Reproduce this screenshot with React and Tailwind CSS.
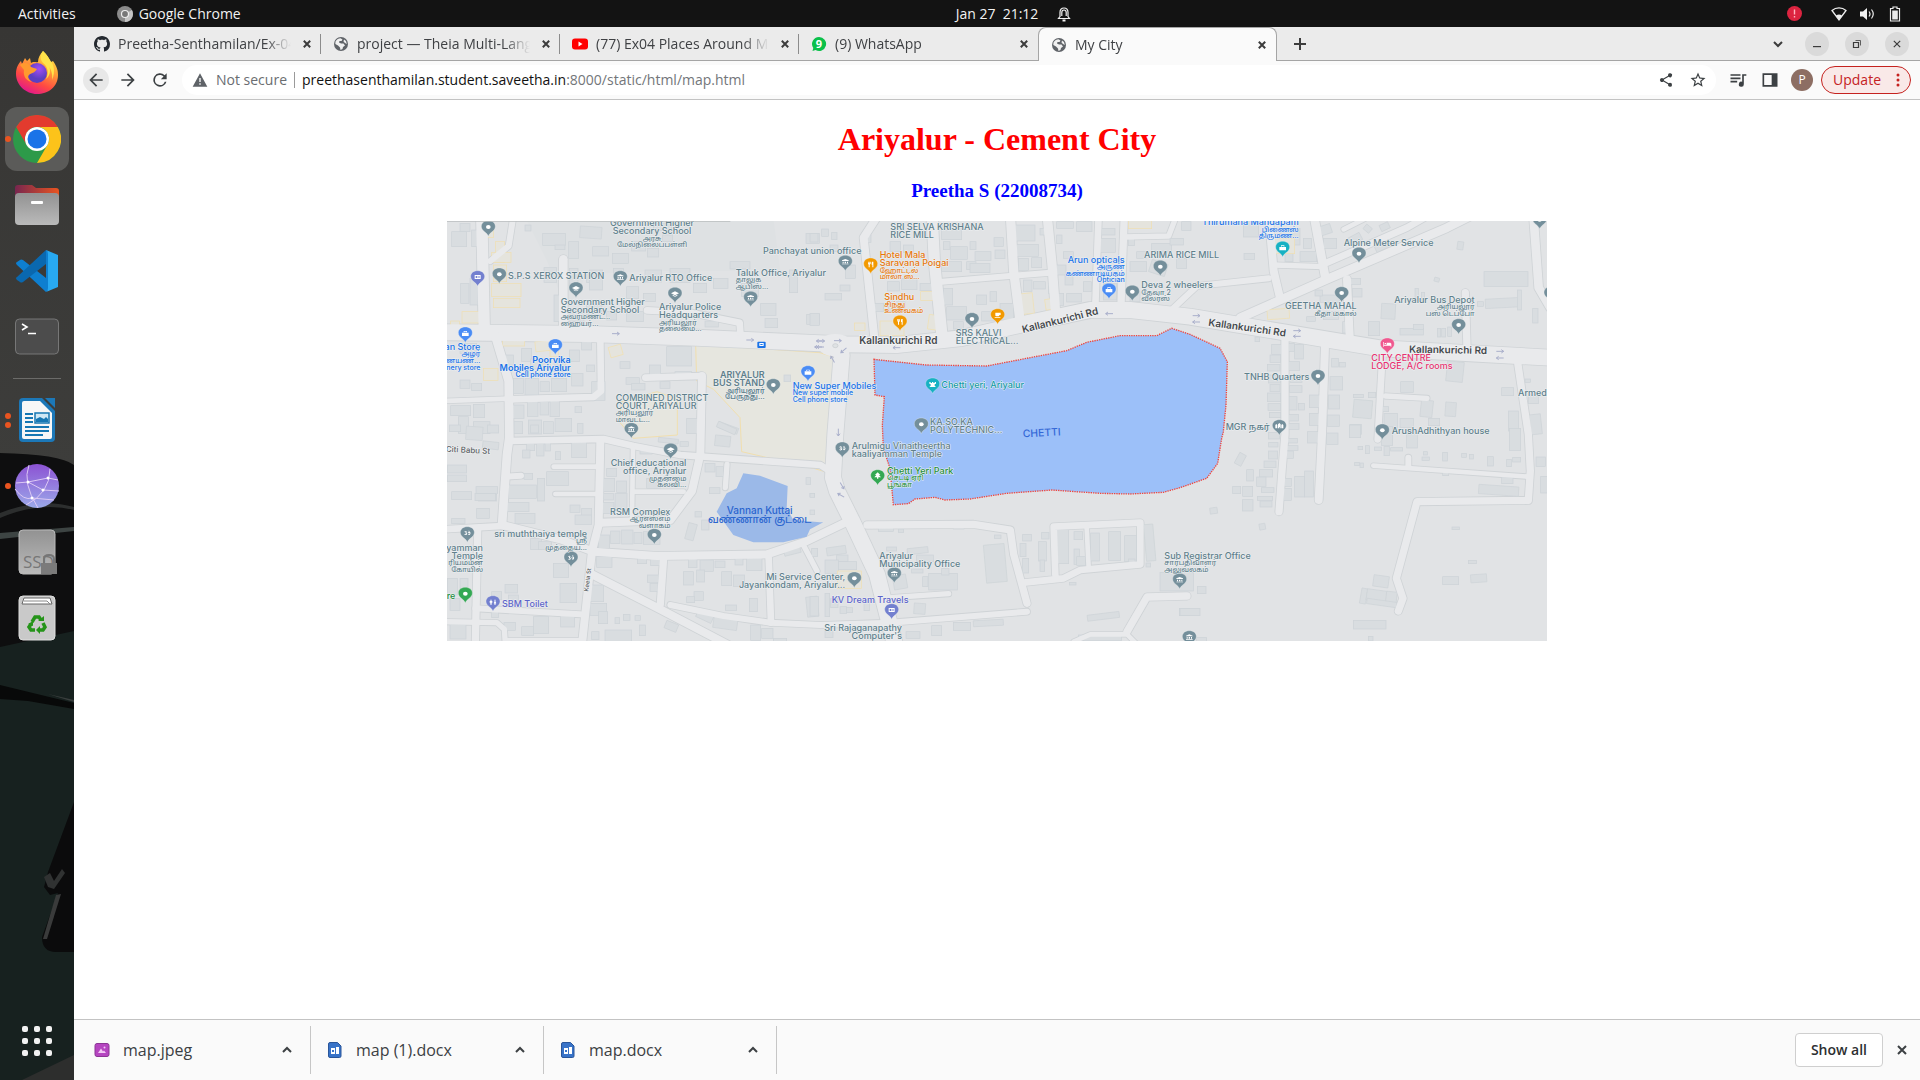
import React from "react";

/* ---------- Map data: canvas units, three to a pixel ---------- */

const GREY = "#5f7f8b";
const BLUE = "#1a73e8";
const PINK = "#e8316f";
const ORANGE = "#e8770a";
const TEAL = "#129aa8";
const GREEN = "#1e8e3e";
const VIOLET = "#5c63c9";

const roads = [
  ["0,334 419,339 749,350 1119,367 1189,370 1349,372 1539,352 1739,307 1929,267 2049,267 2229,287 2529,337 2799,382 3069,397 3309,410", 48],
  ["104,-20 112,330", 34],
  ["130,120 185,75 200,-20", 18],
  ["145,345 185,480 187,650 180,700 165,912", 26],
  ["165,912 340,955 440,992 630,1005 960,1000 1080,960 1215,895", 24],
  ["-10,925 165,915", 20],
  ["92,930 85,1270", 22],
  ["85,1162 400,1180", 18],
  ["-10,1202 150,1205 172,1225 175,1270", 16],
  ["175,1258 410,1258", 14],
  ["460,660 455,912 435,990 405,1270", 24],
  ["185,660 470,654 560,675 700,702 1120,732 1165,760", 20],
  ["460,357 462,510 440,528 185,535", 20],
  ["-10,540 185,533", 14],
  ["349,115 349,330", 26],
  ["880,335 878,305 730,275 600,268", 20],
  ["320,737 450,737", 14],
  ["325,819 450,819", 14],
  ["180,767 222,764", 18],
  ["558,680 555,895", 14],
  ["460,905 670,897 735,810 760,700 765,465", 24],
  ["560,812 710,812", 14],
  ["595,470 760,465", 20],
  ["835,800 840,730", 16],
  ["435,1060 630,1160 850,1275", 24],
  ["650,1010 640,1150", 22],
  ["670,1152 830,1185 970,1205 1120,1212 1330,1205 1740,1172", 18],
  ["965,1010 972,1205", 20],
  ["1068,970 1110,1050", 16],
  ["1184,402 1165,640 1158,770 1170,810 1215,900 1290,1060 1345,1275", 48],
  ["1295,-20 1250,50 1282,350", 24],
  ["1455,-20 1462,120 1485,345", 34],
  ["1690,-20 1700,150 1718,290", 28],
  ["1800,-20 1815,130 1825,265", 28],
  ["1485,182 1810,155", 18],
  ["1955,-20 1945,255", 20],
  ["2032,-20 2022,250", 22],
  ["2030,48 2165,45 2190,-20", 16],
  ["2465,-20 2480,150 2500,235", 24],
  ["2600,-20 2635,170", 26],
  ["2380,290 2640,175 3000,20 3080,-20", 26],
  ["2170,270 2250,195 2465,172", 18],
  ["2480,132 2630,137", 16],
  ["2640,125 2880,20 2950,-20", 20],
  ["2690,25 2760,-10", 14],
  ["2700,175 2708,345", 24],
  ["3055,215 3060,380", 22],
  ["3259,-20 3275,200 3310,260", 26],
  ["2514,345 2514,640 2505,750 2496,872", 22],
  ["2634,375 2625,640 2615,837", 24],
  ["2806,410 2792,655", 20],
  ["2815,525 2940,532", 16],
  ["3210,412 3244,640 3250,750 3244,838 2910,842 2848,1072 2868,1132 2854,1170", 22],
  ["2779,734 3245,767", 14],
  ["2884,710 2884,735", 18],
  ["1260,912 1580,910 1690,927 1700,1000 1740,1147", 22],
  ["1730,1085 1850,1072 1900,1047 2080,1030 2080,905 1820,917 1825,1060", 20],
  ["1919,920 1925,1040", 14],
  ["1330,1130 1505,1118", 16],
  ["2220,1125 2100,1128 2040,1232", 22],
  ["1880,1262 1930,1240 2040,1240 2075,1275", 14],
];

const lake =
  "1281,415 1439,432 1619,435 1859,389 1919,364 2019,344 2129,344 2174,322 2229,340 2319,382 2341,422 2337,552 2329,632 2324,652 2312,727 2279,772 2199,800 2149,814 2049,819 1959,817 1814,807 1679,817 1569,834 1494,837 1464,829 1404,834 1384,848 1339,851 1329,742 1309,682 1306,612 1312,527 1284,522";
const pond =
  "889,757 939,764 1022,795 1019,862 1039,897 1119,904 1129,904 1089,925 1079,947 1009,964 919,964 859,942 809,872 839,817 869,802";

const plots = [
  "746,370 1119,395 1160,408 1150,757 1100,742 884,692 879,590 800,505 749,480",
  "524,542 630,512 691,535 691,642 559,652 515,600",
];

/* Each district: origin, buildings and yellow lots as [x, y, w, h, turn] */
const districts = [
  {
    at: "translate(-21 -18)",
    buildings: [
      [35, 50, 45, 45], [60, 25, 30, 25], [95, 45, 20, 50], [62, 205, 25, 60], [90, 190, 24, 80],
      [255, 30, 18, 18], [308, 55, 68, 36], [345, 90, 30, 14], [386, 80, 30, 50], [420, 35, 65, 35, 4],
      [458, 95, 48, 28], [517, 115, 48, 30], [575, 80, 42, 28], [622, 100, 34, 26], [668, 60, 30, 20],
      [640, 25, 54, 22], [312, 158, 38, 44], [388, 160, 26, 50], [440, 175, 30, 28], [448, 165, 40, 60],
      [520, 160, 30, 20], [615, 165, 50, 36], [690, 160, 60, 42], [760, 205, 40, 28], [820, 190, 44, 30],
      [905, 205, 50, 40], [962, 265, 46, 36], [975, 310, 38, 28], [1048, 165, 25, 68], [1098, 55, 40, 30],
      [1100, 298, 38, 30], [610, 235, 36, 25], [560, 215, 36, 36], [342, 240, 16, 80], [382, 280, 50, 40],
      [440, 270, 46, 30], [500, 290, 30, 25], [560, 290, 50, 30], [795, 318, 40, 18], [870, 140, 60, 22],
      [60, 385, 50, 30], [180, 420, 40, 30], [245, 400, 30, 40], [272, 432, 60, 30], [342, 440, 34, 30],
      [388, 405, 30, 35], [425, 380, 30, 25], [440, 450, 24, 20], [60, 495, 30, 25], [95, 505, 30, 22],
      [220, 490, 30, 45], [255, 490, 40, 50], [300, 500, 28, 30], [335, 490, 45, 40], [395, 475, 34, 38],
      [455, 500, 40, 56], [680, 395, 75, 58], [628, 450, 34, 30], [558, 488, 40, 20], [575, 505, 40, 20],
      [540, 440, 30, 20], [660, 500, 30, 20], [32, 572, 60, 30], [55, 605, 30, 50], [100, 568, 34, 40],
      [100, 620, 50, 36], [218, 570, 34, 40], [262, 558, 32, 46], [300, 560, 26, 40], [330, 555, 28, 50],
      [222, 620, 26, 36], [265, 615, 40, 42], [310, 620, 30, 36], [345, 610, 50, 40], [413, 625, 16, 30],
      [405, 575, 20, 18], [1032, 480, 20, 20], [705, 470, 50, 16], [740, 610, 32, 46], [835, 630, 60, 18, 20],
    ],
    lots: [
      [120, 40, 40, 28], [166, 80, 28, 62], [155, 112, 58, 30], [160, 150, 40, 50], [155, 205, 88, 40],
      [160, 250, 80, 28], [66, 290, 60, 34], [32, 318, 26, 20], [188, 365, 66, 28], [286, 378, 50, 30, -6],
      [508, 392, 38, 32, -16], [130, 460, 44, 36], [330, 395, 26, 30],
    ],
  },
  {
    at: "translate(1089 -18)",
    buildings: [
      [35, 42, 20, 22], [0, 55, 24, 26], [65, 52, 16, 22], [60, 90, 24, 20], [45, 235, 50, 20], [106, 150, 30, 40],
      [90, 210, 30, 18], [0, 295, 28, 36], [165, 60, 18, 22], [240, 80, 32, 30], [280, 90, 30, 22],
      [232, 200, 36, 28], [275, 190, 46, 34], [330, 205, 40, 22], [185, 265, 36, 24], [235, 260, 50, 30],
      [395, 30, 60, 44], [400, 80, 20, 24], [422, 95, 50, 38], [480, 80, 18, 24], [495, 110, 48, 26],
      [395, 140, 60, 30], [470, 140, 28, 24], [552, 68, 28, 26], [555, 105, 30, 26], [480, 145, 60, 28],
      [615, 30, 60, 48], [620, 88, 65, 36], [690, 40, 20, 20], [625, 130, 30, 36], [665, 128, 30, 30],
      [400, 220, 28, 50], [410, 275, 60, 40], [500, 240, 30, 28], [540, 230, 20, 30], [515, 290, 40, 28],
      [570, 265, 40, 50], [430, 320, 30, 22], [640, 195, 26, 34], [670, 200, 36, 22], [715, 205, 16, 30],
      [740, 60, 16, 26], [760, 110, 30, 20], [740, 150, 28, 30], [765, 180, 24, 30], [735, 235, 26, 36],
      [770, 235, 44, 26], [820, 200, 24, 30], [740, 20, 50, 20], [800, 20, 46, 30], [875, 40, 40, 20],
      [870, 70, 46, 42], [880, 205, 40, 50], [960, 140, 50, 30], [980, 110, 28, 20], [955, 70, 18, 22],
      [1025, 85, 60, 26], [1020, 140, 50, 38, 18], [960, 230, 30, 30], [1080, 70, 40, 20], [1100, 130, 30, 30],
    ],
    lots: [
      [332, 230, 46, 26], [355, 300, 30, 44, 8], [210, 318, 72, 44], [133, 324, 32, 22], [628, 235, 42, 62, -6],
      [706, 252, 24, 32, -8], [955, 5, 70, 36],
    ],
  },
  {
    at: "translate(2199 -18)",
    buildings: [
      [5, 20, 28, 26], [190, 18, 46, 48], [192, 115, 32, 18], [300, 40, 60, 50], [370, 70, 24, 30],
      [420, 30, 34, 28, -18], [430, 70, 40, 30], [505, 60, 40, 24, -28], [552, 32, 22, 18, 40], [600, 25, 28, 20, -25],
      [585, 85, 40, 20, -25], [360, 110, 50, 30], [315, 110, 24, 30], [832, 80, 18, 24, 8], [763, 188, 15, 12, 15],
      [912, 170, 132, 44], [916, 250, 105, 28, -3], [892, 260, 18, 14], [1012, 225, 12, 60], [1058, 280, 16, 44],
      [510, 190, 32, 18], [518, 220, 28, 26], [420, 240, 60, 22], [430, 290, 45, 24], [380, 305, 26, 14],
      [604, 266, 42, 46, 3], [565, 320, 34, 42], [660, 340, 70, 20], [700, 328, 30, 16], [772, 340, 10, 26],
      [785, 340, 12, 26], [803, 336, 12, 28], [705, 220, 10, 36], [724, 232, 10, 24], [488, 320, 20, 34],
      [405, 225, 22, 18], [225, 366, 14, 14], [275, 388, 30, 30], [270, 420, 32, 22], [262, 448, 38, 20],
      [265, 480, 36, 24], [270, 508, 30, 22], [262, 534, 40, 26], [264, 566, 38, 20], [268, 592, 34, 16],
      [325, 385, 18, 24], [344, 388, 26, 44], [325, 440, 34, 26], [330, 480, 36, 22], [328, 512, 38, 20],
      [327, 545, 24, 40], [355, 565, 18, 20], [325, 598, 30, 20], [325, 625, 32, 18], [455, 430, 20, 26],
      [478, 442, 18, 14], [450, 485, 38, 40], [388, 540, 36, 38], [445, 540, 34, 42], [388, 595, 38, 36],
      [442, 600, 36, 34], [520, 555, 56, 54, 5], [520, 538, 30, 10], [565, 532, 22, 16], [662, 500, 38, 32],
      [722, 556, 36, 50, 6], [796, 562, 32, 42, 4], [608, 575, 18, 15], [510, 628, 34, 30], [612, 595, 40, 44],
      [660, 610, 40, 28], [745, 610, 34, 22], [800, 440, 50, 60, 6], [965, 518, 36, 24], [985, 588, 30, 60],
      [1050, 598, 34, 60, -6], [1035, 492, 16, 10], [1045, 540, 30, 26],
    ],
    lots: [[262, 282, 66, 30, -4], [280, 70, 64, 46]],
  },
  {
    at: "translate(-21 612)",
    buildings: [
      [28, 0, 34, 20], [78, 5, 50, 40, 4], [142, 0, 34, 24], [128, 50, 48, 22, 6], [272, 0, 24, 24],
      [260, 55, 24, 22], [248, 75, 22, 24], [290, 55, 22, 38], [315, 48, 16, 30], [395, 42, 45, 56],
      [346, 80, 16, 24], [22, 120, 58, 24], [22, 150, 58, 20], [108, 185, 65, 20], [115, 208, 55, 20],
      [105, 205, 62, 22], [110, 250, 38, 30], [35, 200, 60, 24], [320, 140, 65, 42], [205, 180, 84, 40],
      [292, 160, 22, 68], [252, 145, 26, 18], [195, 232, 72, 28], [225, 265, 60, 30], [390, 240, 30, 22],
      [425, 250, 30, 25], [405, 270, 50, 28], [210, 300, 26, 34], [272, 340, 32, 34], [295, 350, 40, 24],
      [490, 160, 34, 40], [530, 168, 30, 34], [490, 205, 30, 20], [525, 205, 36, 50], [488, 232, 34, 34],
      [500, 130, 30, 24], [600, 65, 36, 22], [655, 40, 60, 14, 6], [720, 50, 25, 14], [620, 160, 40, 30],
      [825, 32, 46, 32, 6], [830, 0, 60, 18, 24], [795, 115, 30, 26], [828, 125, 22, 30], [808, 188, 32, 18],
      [1098, 158, 14, 20], [1110, 205, 14, 10], [765, 260, 20, 16], [740, 295, 26, 50, 15], [785, 285, 22, 30],
      [475, 330, 34, 40], [512, 318, 28, 38], [545, 315, 34, 42], [582, 322, 24, 34], [610, 320, 50, 38],
      [470, 395, 46, 32], [592, 398, 28, 18], [632, 400, 30, 22], [622, 450, 34, 22], [630, 475, 24, 24],
      [745, 400, 26, 28], [780, 405, 40, 34], [825, 408, 30, 20], [885, 400, 24, 20], [920, 395, 46, 42],
      [340, 415, 46, 42], [22, 460, 30, 50], [60, 460, 24, 30], [30, 520, 30, 36], [195, 478, 38, 26],
      [155, 500, 30, 24], [205, 510, 30, 22], [360, 475, 50, 58], [445, 480, 46, 50], [450, 535, 50, 36],
      [730, 440, 30, 40], [770, 435, 24, 36], [845, 440, 30, 42], [880, 450, 34, 34], [762, 500, 28, 26],
      [740, 515, 24, 18], [856, 540, 34, 16], [928, 520, 24, 40], [770, 560, 50, 26, 25], [820, 578, 72, 34, 8],
      [675, 592, 38, 24, 22], [598, 600, 18, 32], [495, 615, 80, 40], [550, 568, 20, 18], [585, 572, 16, 14],
      [525, 578, 14, 18], [475, 560, 28, 36], [455, 620, 22, 24], [155, 560, 20, 18], [192, 592, 34, 24],
      [280, 575, 46, 50], [362, 572, 42, 34], [245, 605, 36, 26], [30, 598, 48, 44], [932, 600, 30, 46],
      [965, 610, 34, 30], [1000, 640, 40, 16], [1100, 515, 34, 60, -6], [1032, 370, 50, 18, -14], [35, 280, 40, 16],
    ],
    lots: [],
  },
  {
    at: "translate(1089 612)",
    buildings: [
      [205, 304, 45, 15], [265, 312, 16, 10], [430, 302, 32, 10], [0, 205, 14, 12], [0, 255, 14, 14],
      [50, 365, 58, 24, -8], [5, 370, 18, 24], [80, 390, 34, 20], [45, 405, 40, 40], [85, 410, 55, 24],
      [230, 366, 30, 12], [292, 368, 62, 18, -6], [320, 390, 50, 20], [250, 450, 40, 42, -10], [305, 432, 34, 12],
      [338, 455, 16, 30], [356, 445, 86, 50], [395, 430, 22, 20], [312, 535, 34, 32, 4], [525, 358, 62, 114, -5],
      [553, 330, 20, 10], [638, 328, 26, 20], [695, 322, 22, 20], [630, 355, 18, 40], [638, 400, 18, 44],
      [685, 350, 24, 58], [690, 405, 14, 34], [738, 314, 38, 102], [792, 320, 26, 24], [792, 372, 16, 46],
      [800, 395, 26, 26], [842, 324, 26, 84], [896, 320, 36, 86], [944, 332, 36, 78], [1005, 298, 28, 110, -5],
      [955, 402, 20, 10], [1008, 414, 14, 12], [778, 472, 20, 8], [1050, 442, 100, 56], [832, 565, 96, 18, -7],
      [1108, 550, 30, 22], [490, 585, 90, 18, -3], [430, 592, 52, 24], [365, 602, 30, 30], [288, 620, 42, 20],
      [805, 630, 130, 16], [0, 515, 26, 58], [45, 505, 14, 70], [62, 520, 22, 28], [100, 548, 28, 14],
      [162, 525, 16, 32], [45, 618, 24, 20], [90, 545, 20, 20], [130, 600, 30, 18],
    ],
    lots: [[82, 438, 72, 52]],
  },
  {
    at: "translate(2199 612)",
    buildings: [
      [170, 85, 22, 36, 28], [265, 22, 34, 20], [266, 52, 28, 14], [265, 78, 28, 24], [252, 108, 36, 20],
      [238, 134, 40, 22], [230, 156, 28, 28], [200, 134, 20, 34], [188, 184, 30, 30], [158, 184, 24, 22],
      [244, 188, 38, 14], [232, 214, 46, 12], [240, 228, 36, 18], [187, 224, 32, 34], [320, 40, 32, 14],
      [318, 62, 36, 14], [320, 78, 20, 22], [312, 160, 22, 24], [310, 190, 24, 36], [344, 154, 30, 62],
      [374, 138, 26, 78], [382, 20, 34, 34], [440, 24, 34, 34], [90, 248, 22, 18, -8], [238, 296, 18, 18, -10],
      [508, 0, 34, 38], [604, 5, 34, 56], [680, 15, 32, 54], [534, 64, 14, 10], [556, 62, 12, 24], [583, 66, 22, 10],
      [612, 64, 16, 28], [632, 68, 36, 10], [730, 80, 12, 10], [726, 96, 22, 10], [788, 82, 14, 26],
      [845, 85, 14, 12], [868, 88, 12, 14], [922, 95, 18, 28], [980, 103, 14, 22], [998, 97, 24, 14],
      [524, 112, 14, 10], [540, 114, 10, 14], [988, 10, 34, 66], [1068, 96, 28, 28], [1082, 154, 20, 50],
      [788, 142, 18, 10], [965, 156, 34, 20], [896, 182, 120, 28, 4], [816, 306, 22, 8], [865, 406, 24, 10],
      [788, 455, 48, 24], [872, 448, 48, 24, -4], [580, 452, 46, 34, 8], [542, 490, 18, 46, 10], [560, 495, 60, 34, 8],
      [618, 500, 32, 36, 6], [560, 526, 90, 16, 8], [520, 586, 98, 26], [565, 634, 14, 14], [0, 550, 60, 22],
      [52, 484, 26, 22], [50, 638, 30, 14],
    ],
    lots: [],
  },
];

/* [x, y, anchor, colour, latin lines, tamil or small lines] */
const labels = [
  [615, 7, "middle", GREY, ["Government Higher", "Secondary School"], ["அரசு", "மேல்நிலைப்பள்ளி"]],
  [183, 164, "start", GREY, ["S.P.S XEROX STATION"], []],
  [547, 172, "start", GREY, ["Ariyalur RTO Office"], []],
  [341, 242, "start", GREY, ["Government Higher", "Secondary School"], ["அவர்மண்ட்...", "ஹையர்..."]],
  [636, 259, "start", GREY, ["Ariyalur Police", "Headquarters"], ["அரியலூர்", "தலைமை..."]],
  [948, 90, "start", GREY, ["Panchayat union office"], []],
  [866, 156, "start", GREY, ["Taluk Office, Ariyalur"], ["தாலுக", "ஆபிஸ்..."]],
  [100, 378, "end", BLUE, ["an Store"], ["அழர்", "கணயண்...", "nery store"]],
  [371, 416, "end", BLUE, ["Poorvika", "Mobiles Ariyalur"], ["Cell phone store"], 600],
  [953, 463, "end", GREY, ["ARIYALUR", "BUS STAND"], ["அரியலூர்", "பேருந்து..."], 600],
  [1037, 494, "start", BLUE, ["New Super Mobiles"], ["New super mobile", "Cell phone store"]],
  [506, 530, "start", GREY, ["COMBINED DISTRICT", "COURT, ARIYALUR"], ["அரியலூர்", "மாவட்ட..."]],
  [1330, 18, "start", GREY, ["SRI SELVA KRISHANA", "RICE MILL"], []],
  [1298, 103, "start", ORANGE, ["Hotel Mala", "Saravana Poigai"], ["ஹோட்டல்", "மாலா ஸ்..."]],
  [1312, 229, "start", ORANGE, ["Sindhu"], ["சிந்து", "உணவகம்"]],
  [1526, 335, "start", GREY, ["SRS KALVI", "ELECTRICAL..."], []],
  [2033, 116, "end", BLUE, ["Arun opticals"], ["அருண்", "கண்ணாடியகம்", "Optician"]],
  [2091, 103, "start", GREY, ["ARIMA RICE MILL"], []],
  [2083, 193, "start", GREY, ["Deva 2 wheelers"], ["தேவா 2", "வீலர்ஸ்"]],
  [1483, 493, "start", TEAL, ["Chetti yeri, Ariyalur"], []],
  [1449, 602, "start", GREY, ["KA.SO.KA", "POLYTECHNIC..."], []],
  [2555, 4, "end", BLUE, ["Thirumana Mandapam"], ["பிணைஸ்", "திருமண..."]],
  [2690, 65, "start", GREY, ["Alpine Meter Service"], []],
  [2729, 256, "end", GREY, ["GEETHA MAHAL"], ["கீதா மகால்"]],
  [3083, 236, "end", GREY, ["Ariyalur Bus Depot"], ["அரியலூர்", "பஸ் டெப்போ"]],
  [2773, 410, "start", PINK, ["CITY CENTRE", "LODGE, A/C rooms"], []],
  [2391, 468, "start", GREY, ["TNHB Quarters"], []],
  [3213, 516, "start", GREY, ["Armed"], []],
  [2336, 618, "start", GREY, ["MGR நகர்"], []],
  [2834, 630, "start", GREY, ["ArushAdhithyan house"], []],
  [718, 727, "end", GREY, ["Chief educational", "office, Ariyalur"], ["முதன்மை", "கல்வி..."]],
  [670, 873, "end", GREY, ["RSM Complex"], ["ஆர்எஸ்எம்", "வளாகம்"]],
  [420, 938, "end", GREY, ["sri muththaiya temple"], ["ஸ்ரீ", "முத்தைய..."]],
  [108, 980, "end", GREY, ["yamman", "Temple"], ["ரியம்மன்", "கோயில்"]],
  [-10, 1126, "start", GREEN, ["tre"], []],
  [165, 1149, "start", VIOLET, ["SBM Toilet"], []],
  [1195, 1067, "end", GREY, ["Mi Service Center,", "Jayankondam, Ariyalur..."], []],
  [1214, 675, "start", GREY, ["Arulmigu Vinaitheertha", "kaaliyamman Temple"], []],
  [1320, 750, "start", GREEN, ["Chetti Yeri Park"], ["செட்டி ஏரி", "பூங்கா"]],
  [1297, 1005, "start", GREY, ["Ariyalur", "Municipality Office"], []],
  [1154, 1138, "start", VIOLET, ["KV Dream Travels"], []],
  [1365, 1221, "end", GREY, ["Sri Rajaganapathy", "Computer's"], []],
  [2152, 1004, "start", GREY, ["Sub Registrar Office"], ["சார்பதிவாளர்", "அலுவலகம்"]],
];

/* [x, y, colour, glyph] */
const SLATE = "#748f9b";
const SKY = "#4a8cf5";
const pins = [
  [124, 18, SLATE, "dot"], [92, 168, "#7380cf", "card"], [157, 160, SLATE, "dot"], [387, 202, SLATE, "cap"],
  [520, 168, SLATE, "hall"], [684, 218, SLATE, "cap"], [911, 230, SLATE, "hall"], [55, 337, SKY, "bag"],
  [325, 373, SKY, "bag"], [979, 492, SLATE, "dot"], [1083, 453, SKY, "bag"], [553, 624, SLATE, "hall"],
  [1195, 122, SLATE, "hall"], [1271, 130, "#f29900", "fork"], [1359, 302, "#f29900", "fork"], [1575, 294, SLATE, "dot"],
  [1652, 282, "#f29900", "cup"], [1986, 206, SKY, "bag"], [2140, 137, SLATE, "dot"], [2056, 212, SLATE, "dot"],
  [1457, 490, "#17b1c3", "castle"], [1423, 610, SLATE, "dot"], [2507, 80, "#17b1c3", "bag"], [2736, 98, SLATE, "dot"],
  [2684, 216, SLATE, "dot"], [3035, 312, SLATE, "dot"], [2821, 370, "#f0588f", "bed"], [2613, 465, SLATE, "dot"],
  [2497, 615, SLATE, "city"], [2806, 628, SLATE, "dot"], [3278, -4, SLATE, "dot"], [3312, 216, SLATE, "dot"],
  [671, 686, SLATE, "cap"], [622, 942, SLATE, "dot"], [61, 936, SLATE, "om"], [372, 1010, SLATE, "om"],
  [55, 1118, "#34a853", "dot"], [138, 1143, "#7380cf", "people"], [1186, 682, SLATE, "om"], [1292, 765, "#34a853", "tree"],
  [1342, 1058, SLATE, "hall"], [1222, 1072, SLATE, "dot"], [1334, 1167, "#7380cf", "card"], [2198, 1076, SLATE, "hall"],
  [2227, 1248, SLATE, "hall"],
];

const glyphs = {
  dot: "M-7 0a7 6 0 1 0 14 0a7 6 0 1 0-14 0",
  card: "M-9-6H9V6H-9ZM-6-3V3H-1V-3ZM2-3V-1H6V-3ZM2 1V3H6V1Z",
  cap: "M-12-1L0-7L12-1L0 5ZM-7 3L0 7L7 3V6L0 9L-7 6Z",
  hall: "M-10-4L0-8L10-4V-2H-10ZM-8 0H-5V5H-8ZM-2 0H2V5H-2ZM5 0H8V5H5ZM-10 6H10V8H-10Z",
  bag: "M-10-2H10V8H-10ZM-5-3V-7H5V-3H3V-5H-3V-3Z",
  fork: "M-8-8H-6V-3H-5V-8H-3V-3H-2V-8H0V-2L-3 1V9H-6V1L-8-2ZM4-8H8V9H5V1H3V-4Z",
  cup: "M-9-7H9V0H5V2L3 4H-4L-7 2V-7ZM-9 6H8V8H-9Z",
  castle: "M-10-7H-6V-4H-2V-7H2V-4H6V-7H10V-2L6 0V4L10 8H-10L-6 4V0L-10-2Z",
  city: "M-12-3L-9-6L-6-3V7H-12ZM-4-5L0-9L4-5V7H1V3H-1V7H-4ZM6-3L9-6L12-3V7H6Z",
  bed: "M-12-7H-10V1H-2V-5H9L12-2V7H10V4H-10V7H-12ZM-8-4H-4V-1H-8Z",
  om: "M-9-4C-4-9 1-4-3 0C3 2-2 9-9 5L-8 3C-4 5-2 2-6 1V-1C-3-3-5-5-8-2ZM1-1C6-6 11-3 9 3C7 7 3 6 2 3L4 2C7 5 8-1 5-1L2 1ZM2-7L8-6L5-4Z",
  people: "M-8-7H-4V-4H-8ZM-10-3H-2V2H-4V8H-8V2H-10ZM4-7H8V-4H4ZM5-3H7L10 4H8V8H4V4H2Z",
  tree: "M0-11L8-3H4L10 4H2V8H-2V4H-10L-4-3H-8Z",
};

const arrows = [
  [506, 338, 0], [909, 357, 0], [1119, 360, 180], [1120, 378, 180], [1122, 360, 0], [1172, 359, 0], [1114, 378, 180],
  [1190, 388, 140], [1157, 415, 240], [1349, 380, 180], [1987, 278, 180], [2248, 284, 0], [2248, 303, 180],
  [2550, 329, 0], [2550, 346, 180], [3159, 391, 0], [3159, 411, 180], [1174, 634, 90], [1185, 794, 60], [1182, 823, 210],
];

function MapLabel({ item }) {
  const [x, y, anchor, colour, main, small, weight] = item;
  return (
    <text textAnchor={anchor} fill={colour} fontWeight={weight || 500} stroke="#eef1f3" strokeWidth="3" paintOrder="stroke" strokeLinejoin="round">
      {main.map((line, i) => (
        <tspan key={i} x={x} y={y + 9 + i * 24} fontSize="27">
          {line}
        </tspan>
      ))}
      {small.map((line, i) => (
        <tspan key={"s" + i} x={x} y={y + 8 + (main.length - 1) * 24 + (i + 1) * 20} fontSize="21">
          {line}
        </tspan>
      ))}
    </text>
  );
}

function CityMap() {
  return (
    <svg viewBox="0 0 3300 1260" className="block w-[1100px] max-w-full" role="img" aria-label="Map of Ariyalur" fontFamily='Inter, "Noto Sans Tamil", "Noto Sans", sans-serif'>
      <rect width="3300" height="1260" fill="#e1e3e5" />
      <path d="M240 0H980L1000 150H620L420 160L360 270L300 120Z" fill="#dee1e3" />
      {plots.map((p, i) => (
        <polygon key={i} points={p} fill="#e6e6df" stroke="#f1dfae" strokeWidth="3" />
      ))}
      <g fill="none" stroke="#cfd3d6" strokeLinecap="round" strokeLinejoin="round">
        {roads.map(([p, w], i) => (
          <polyline key={i} points={p} strokeWidth={w + 5} />
        ))}
      </g>
      {districts.map((d, i) => (
        <g key={i} transform={d.at} strokeWidth="2">
          {d.buildings.map(([x, y, w, h, t = 0], j) => (
            <rect key={j} x={x} y={y} width={w} height={h} transform={`rotate(${t} ${x + w / 2} ${y + h / 2})`} fill="#d9dde0" stroke="#cdd3d7" />
          ))}
          {d.lots.map(([x, y, w, h, t = 0], j) => (
            <rect key={"l" + j} x={x} y={y} width={w} height={h} transform={`rotate(${t} ${x + w / 2} ${y + h / 2})`} fill="#e5e4dd" stroke="#f1dfae" />
          ))}
        </g>
      ))}
      <g fill="none" stroke="#e9eaec" strokeLinecap="round" strokeLinejoin="round">
        {roads.map(([p, w], i) => (
          <polyline key={i} points={p} strokeWidth={w} />
        ))}
      </g>
      <ellipse cx="1165" cy="373" rx="52" ry="34" fill="#e9eaec" />
      <ellipse cx="1165" cy="374" rx="8" ry="6" fill="#dfe2e4" stroke="#c5cacd" strokeWidth="2" />
      <polygon points={lake} fill="#9cc0f9" stroke="#f0453c" strokeWidth="4" strokeDasharray="4 3" />
      <polygon points={pond} fill="#9bb9e8" />
      <g stroke="#a9afcb" strokeWidth="3" fill="none">
        {arrows.map(([x, y, a], i) => (
          <path key={i} d="M-11 0H11M4-5L11 0L4 5" transform={`translate(${x} ${y}) rotate(${a})`} />
        ))}
      </g>
      <rect x="931" y="362" width="25" height="19" rx="3" fill="#1a73e8" />
      <path d="M937 366H950V375H937Z M940 369V372H947V369Z" fill="#fff" fillRule="evenodd" />
      {pins.map(([x, y, c, g], i) => (
        <g key={i} transform={`translate(${x} ${y})`}>
          <path d="M0 28C-4 15-21 13-21-2C-21-12-12-19 0-19S21-12 21-2C21 13 4 15 0 28Z" fill={c} stroke="#eceff1" strokeWidth="1" />
          <path d={glyphs[g]} fill="#fff" fillRule="evenodd" />
        </g>
      ))}
      {labels.map((l, i) => (
        <MapLabel key={i} item={l} />
      ))}
      <g fill="#44484c" fontSize="30" fontWeight="600" stroke="#f3f4f5" strokeWidth="4" paintOrder="stroke">
        <text x="1237" y="369">Kallankurichi Rd</text>
        <text transform="translate(1728 336) rotate(-14)">Kallankurichi Rd</text>
        <text transform="translate(2283 314) rotate(8)">Kallankurichi Rd</text>
        <text x="2886" y="395" transform="rotate(1 2886 395)">Kallankurichi Rd</text>
      </g>
      <g fill="#5d6366" fontSize="24" fontWeight="500" stroke="#f3f4f5" strokeWidth="3" paintOrder="stroke">
        <text transform="translate(-4 692) rotate(3)">Citi Babu St</text>
        <text transform="translate(424 1112) rotate(-83)" fontSize="18">Keela St</text>
      </g>
      <text x="1728" y="649" fontSize="31" fontWeight="500" fill="#3367d6" transform="rotate(-3 1728 649)">CHETTI</text>
      <g fill="#2a65cf" fontWeight="500" textAnchor="middle">
        <text x="938" y="878" fontSize="30">Vannan Kuttai</text>
        <text x="938" y="906" fontSize="30">வண்ணான் குட்டை</text>
      </g>
      <path d="M0 0H850" stroke="#b9bcbe" strokeWidth="4" />
    </svg>
  );
}

/* ---------- Small drawings ---------- */

function Icon({ d, size = 16, box = 24, fill = "currentColor", className = "", children, ...rest }) {
  return (
    <svg width={size} height={size} viewBox={`0 0 ${box} ${box}`} fill={fill} className={"shrink-0 " + className} aria-hidden="true" {...rest}>
      {d && <path d={d} fillRule="evenodd" />}
      {children}
    </svg>
  );
}

const GithubMark = () => (
  <Icon box={16} fill="#24292f" d="M8 0C3.58 0 0 3.58 0 8c0 3.54 2.29 6.53 5.47 7.59.4.07.55-.17.55-.38 0-.19-.01-.82-.01-1.49-2.01.37-2.53-.49-2.69-.94-.09-.23-.48-.94-.82-1.13-.28-.15-.68-.52-.01-.53.63-.01 1.08.58 1.23.82.72 1.21 1.87.87 2.33.66.07-.52.28-.87.51-1.07-1.78-.2-3.64-.89-3.64-3.95 0-.87.31-1.59.82-2.15-.08-.2-.36-1.02.08-2.12 0 0 .67-.21 2.2.82.64-.18 1.32-.27 2-.27s1.36.09 2 .27c1.53-1.04 2.2-.82 2.2-.82.44 1.1.16 1.92.08 2.12.51.56.82 1.27.82 2.15 0 3.07-1.87 3.75-3.65 3.95.29.25.54.73.54 1.48 0 1.07-.01 1.93-.01 2.2 0 .21.15.46.55.38A8.01 8.01 0 0 0 16 8c0-4.42-3.58-8-8-8z" />
);
const GlobeMark = () => (
  <Icon box={16}>
    <circle cx="8" cy="8" r="7" fill="#5f6368" />
    <path d="M2.500 5.500C4 3 5.500 2.500 7.500 2.300L9.500 3.500L8.500 5H6.500L6 6.500L8 7.500H10.500L12 9.500L10 11L9.500 13L7.500 14L7 11.500L5 9.500L2.300 8Z M11 3.500L13 5L13.800 8L12 7L10.500 5.500Z" fill="#f0f0f0" />
  </Icon>
);
const YoutubeMark = () => (
  <Icon box={16}>
    <rect x="0" y="2.500" width="16" height="11" rx="3" fill="#f00" />
    <path d="M6.500 5.500L10.500 8L6.500 10.500Z" fill="#fff" />
  </Icon>
);
const WhatsappMark = () => (
  <Icon box={16}>
    <path d="M8 1a7 7 0 1 1-3.500 13L1.500 15L2.300 12A7 7 0 0 1 8 1Z" fill="#0ac04a" />
    <text x="8" y="12" textAnchor="middle" fontSize="11" fontWeight="700" fill="#fff" fontFamily="Open Sans, sans-serif">9</text>
  </Icon>
);

const tabs = [
  { title: "Preetha-Senthamilan/Ex-04", mark: <GithubMark /> },
  { title: "project — Theia Multi-Language", mark: <GlobeMark /> },
  { title: "(77) Ex04 Places Around Me", mark: <YoutubeMark /> },
  { title: "(9) WhatsApp", mark: <WhatsappMark /> },
  { title: "My City", mark: <GlobeMark />, active: true },
];

function Cross({ size = 8, width = 2 }) {
  return (
    <Icon size={size} box={8} stroke="currentColor" strokeWidth={width}>
      <path d="M0.800 0.800L7.200 7.200M7.200 0.800L0.800 7.200" fill="none" />
    </Icon>
  );
}

function Tab({ title, mark, active, divider }) {
  const shape = active
    ? "rounded-t-lg border border-b-0 border-[#a5a5a5] bg-[#fafafa]"
    : "border-b border-[#a5a5a5]";
  return (
    <div className={"relative flex h-[34px] w-[239px] min-w-0 items-center pl-3 pr-[6px] " + shape}>
      {mark}
      <button className="ml-2 min-w-0 flex-1 overflow-hidden whitespace-nowrap text-left [mask-image:linear-gradient(to_right,black_85%,transparent)]">{title}</button>
      <button aria-label={"Close " + title} className="ml-2 flex h-4 w-4 items-center justify-center text-[#3c3c3c]">
        <Cross />
      </button>
      {divider && <span className="absolute right-0 top-[7px] h-5 w-px bg-[#8c8c8c]" />}
    </div>
  );
}

function TopBar() {
  return (
    <header className="grid h-[27px] shrink-0 grid-cols-[1fr_auto_1fr] items-center bg-[#131313] text-sm text-[#f2f2f2]">
      <nav className="flex items-center pl-[18px]">
        <button>Activities</button>
        <button className="ml-[41px] flex items-center gap-[6px]">
          <Icon box={16}>
            <circle cx="8" cy="8" r="8" fill="#8b8b8b" />
            <path d="M8 8L14.900 4A8 8 0 0 1 8 16Z" fill="#c4c4c4" />
            <circle cx="8" cy="8" r="3.500" fill="#777" stroke="#eee" strokeWidth="1.200" />
          </Icon>
          Google Chrome
        </button>
      </nav>
      <button className="flex items-center gap-[18px] pl-[108px]">
        <span className="whitespace-pre">Jan 27  21:12</span>
        <Icon box={16} fill="none" stroke="#f2f2f2" strokeWidth="1.200">
          <path d="M2.500 12.500H13.500L12 10.500V6.500C12 3.500 10.500 2 8 2S4 3.500 4 6.500V10.500ZM5.800 10V6.500C5.800 5 6.500 4 8 4S10.200 5 10.200 6.500V10" />
          <path d="M6.500 14.500H9.500" strokeWidth="2" />
        </Icon>
      </button>
      <div className="flex items-center justify-end pr-[17px]">
        <Icon size={15} box={15} className="mr-[29px]">
          <circle cx="7.500" cy="7.500" r="7.500" fill="#dc2440" />
          <path d="M6.800 3.500H8.200V8.500H6.800ZM6.800 10H8.200V11.500H6.800Z" fill="#ffb5bf" />
        </Icon>
        <Icon box={16} className="mr-3">
          <path d="M1 4.500C5 1 11 1 15 4.500L8 14Z" fill="none" stroke="#eee" strokeWidth="1.300" />
          <path d="M5 9.500Q8 7.500 11 9.500L8 14Z" fill="#eee" />
        </Icon>
        <Icon box={16} className="mr-3" fill="#f2f2f2">
          <path d="M1 5.500H4L8 2V14L4 10.500H1Z" />
          <path d="M10 5.500Q12 8 10 10.500M12.500 3.500Q16 8 12.500 12.500" fill="none" stroke="#eee" strokeWidth="1.200" />
        </Icon>
        <Icon box={16}>
          <path d="M6 1H10V2.500H12.500V15H3.500V2.500H6Z" fill="none" stroke="#eee" strokeWidth="1.200" />
          <rect x="5.200" y="4.500" width="5.600" height="9" fill="#eee" />
        </Icon>
      </div>
    </header>
  );
}

function TabStrip() {
  return (
    <div className="flex h-[34px] shrink-0 bg-[#ebebeb] text-sm text-[#3f4144]">
      <div className="w-2 border-b border-[#a5a5a5]" />
      {tabs.map((t, i) => (
        <Tab key={t.title} {...t} divider={i < 3} />
      ))}
      <div className="flex flex-1 items-center border-b border-[#a5a5a5] pl-[17px] pr-[11px] text-[#3c3c3c]">
        <button aria-label="New tab">
          <Icon size={12} box={12} stroke="currentColor" strokeWidth="2">
            <path d="M6 0V12M0 6H12" />
          </Icon>
        </button>
        <div className="ml-auto flex items-center gap-4">
          <button aria-label="Search tabs" className="mr-[6px]">
            <Icon size={10} box={10} fill="none" stroke="currentColor" strokeWidth="2">
              <path d="M1 3L5 7L9 3" />
            </Icon>
          </button>
          <button aria-label="Minimize" className="flex h-6 w-6 items-center justify-center rounded-full bg-[#dadada]">
            <Icon size={10} box={10} d="M1 7H9V8.200H1Z" />
          </button>
          <button aria-label="Restore" className="flex h-6 w-6 items-center justify-center rounded-full bg-[#dadada]">
            <Icon size={10} box={10} fill="none" stroke="currentColor" strokeWidth="1.200">
              <path d="M1.500 3.500H6.500V8.500H1.500Z" />
              <path d="M3.500 1.500H8.500V6.500" strokeWidth="0.800" />
            </Icon>
          </button>
          <button aria-label="Close window" className="flex h-6 w-6 items-center justify-center rounded-full bg-[#dadada]">
            <Cross width={1.2} />
          </button>
        </div>
      </div>
    </div>
  );
}

function Toolbar() {
  return (
    <div className="flex h-[39px] shrink-0 items-center border-b border-[#c3c3c3] bg-[#fafafa] pl-[9px] pr-[9px] text-sm text-[#3c4043]">
      <button aria-label="Back" className="flex h-[26px] w-[26px] items-center justify-center rounded-full bg-[#e8e8e8]">
        <Icon size={20} d="M20 11H7.800l5.600-5.600L12 4l-8 8 8 8 1.400-1.400L7.800 13H20z" />
      </button>
      <button aria-label="Forward" className="ml-[9px]">
        <Icon size={20} d="M4 11H16.200L10.600 5.400L12 4L20 12L12 20L10.600 18.600L16.200 13H4Z" />
      </button>
      <button aria-label="Reload" className="ml-3">
        <Icon size={20} d="M17.650 6.350A8 8 0 1 0 19.730 14H17.650A6 6 0 1 1 12 6c1.660 0 3.140.69 4.220 1.780L13 11h7V4z" />
      </button>
      <div className="ml-3 flex h-[30px] flex-1 items-center rounded-full bg-white pl-[10px] pr-[9px]">
        <Icon size={16} fill="#5f6368" d="M1 22H23L12 2ZM13 19H11V17H13ZM13 15H11V9H13Z" />
        <button className="ml-2 text-[#6a6d71]">Not secure</button>
        <span className="mx-[7px] h-4 w-px bg-[#9a9a9a]" />
        <a href="#map" aria-label="Page address" className="flex-1 text-[#73767a]">
          <span className="text-[#111]">preethasenthamilan.student.saveetha.in</span>:8000/static/html/map.html
        </a>
        <button aria-label="Share">
          <Icon size={16} d="M18 16.100c-.8 0-1.400.3-2 .8l-7.100-4.200a3 3 0 0 0 0-1.400L16 7.200A3 3 0 1 0 15 5l.1.700L8 9.800a3 3 0 1 0 0 4.400l7.100 4.200A3 3 0 1 0 18 16.100z" />
        </button>
        <button aria-label="Bookmark" className="ml-[15px]">
          <Icon size={18} d="M22 9.240l-7.190-.62L12 2 9.190 8.630 2 9.240l5.460 4.730L5.820 21 12 17.270 18.180 21l-1.630-7.030zM12 15.400l-3.760 2.270 1-4.280-3.320-2.880 4.380-.38L12 6.100l1.710 4.040 4.380.38-3.320 2.880 1 4.280z" />
        </button>
      </div>
      <button aria-label="Media controls" className="ml-3">
        <Icon size={20} d="M3 5H15V7H3ZM3 9H15V11H3ZM3 13H11V15H3ZM17 5H22V7H19V17A3 3 0 1 1 17 14.200Z" />
      </button>
      <button aria-label="Side panel" className="ml-3">
        <Icon size={20} d="M3 4H21V20H3ZM5 6V18H14V6Z" />
      </button>
      <button aria-label="Profile" className="ml-[11px] flex h-[22px] w-[22px] items-center justify-center rounded-full bg-[#8d6e63] text-xs text-white">P</button>
      <button className="ml-2 flex h-7 items-center gap-[15px] rounded-full border border-[#c5221f] bg-[#f9e9e8] pl-[11px] pr-[10px] text-[#c5221f]">
        Update
        <Icon size={14} box={14} className="-mx-[5px]">
          <circle cx="7" cy="2" r="1.500" />
          <circle cx="7" cy="7" r="1.500" />
          <circle cx="7" cy="12" r="1.500" />
        </Icon>
      </button>
    </div>
  );
}

/* ---------- Dock ---------- */

function Wallpaper() {
  return (
    <svg viewBox="0 0 74 1053" preserveAspectRatio="none" className="absolute inset-0 h-full w-full" aria-hidden="true">
      <defs>
        <linearGradient id="wall" x1="0" y1="0" x2="0" y2="1">
          <stop offset="0" stopColor="#373634" />
          <stop offset="1" stopColor="#3d3d3b" />
        </linearGradient>
      </defs>
      <rect width="74" height="1053" fill="#0e0e0f" />
      <path d="M0 0H74V438Q60 427 0 426Z" fill="url(#wall)" />
      <path d="M0 486Q40 470 74 480V483Q40 474 0 491Z" fill="#2c2e2e" />
      <path d="M0 506L74 500V504L0 512Z" fill="#3d4443" />
      <path d="M0 620L74 604V1053H0Z" fill="#17211f" />
      <path d="M0 658L74 676V682L28 674L0 672Z" fill="#080909" />
      <path d="M48 667L74 673V675Z" fill="#3a3f3e" />
      <path d="M74 775L48 845L44 860L50 868L58 866L42 910Q42 925 56 925L74 925Z" fill="#0b0b0c" />
      <path d="M56 868L61 867L47 912L43 912Z" fill="#3a3b3b" />
      <path d="M44 850L50 846L54 854L62 842L65 846L54 862L48 860Z" fill="#303232" />
      <path d="M22 1053L74 1028V1053Z" fill="#2d2e2d" />
    </svg>
  );
}

function DockItem({ label, dots = 0, active, children }) {
  return (
    <button aria-label={label} className={"relative flex h-16 w-16 items-center justify-center rounded-xl " + (active ? "bg-[#5b5b59]" : "")}>
      {children}
      {dots > 0 && (
        <span className="absolute left-0 flex flex-col gap-[3px]">
          {Array.from({ length: dots }, (_, i) => (
            <span key={i} className="h-[6px] w-[6px] rounded-full bg-[#e95420]" />
          ))}
        </span>
      )}
    </button>
  );
}

function Dock() {
  return (
    <aside className="relative flex w-[74px] shrink-0 flex-col items-center overflow-hidden bg-[#373634] pt-[14px]">
      <Wallpaper />
      <div className="relative flex flex-1 flex-col items-center gap-[2px]">
        <DockItem label="Firefox">
          <Icon size={44} box={44}>
            <defs>
              <linearGradient id="fx" x1="0.800" y1="0" x2="0.300" y2="1">
                <stop offset="0" stopColor="#fff44f" />
                <stop offset="0.350" stopColor="#ffa436" />
                <stop offset="0.700" stopColor="#ff4a42" />
                <stop offset="1" stopColor="#e01590" />
              </linearGradient>
              <radialGradient id="fxg" cx="0.600" cy="0.300">
                <stop offset="0" stopColor="#a44cf4" />
                <stop offset="1" stopColor="#5b3fc2" />
              </radialGradient>
            </defs>
            <path d="M28 0C32 4 34 7 36 11L38 10C42 16 43 19 43 24C43 36 33 43 22 43S1 34 1 23C1 16 4 12 6 10L7 13L10 7L12 10L15 7L16 12C19 10 21 12 23 11C23 7 25 3 28 0Z" fill="url(#fx)" />
            <circle cx="22" cy="22" r="10" fill="url(#fxg)" />
            <path d="M5 14C9 10 15 13 16 16L22 18C20 22 16 22 14 24C12 26 14 29 17 31C11 30 8 25 9 19Z" fill="#ff9a2e" />
            <path d="M28 0C25 5 25 9 28 12C33 16 34 22 31 28C35 25 36 19 34 15C36 19 38 23 37 29C41 20 38 12 36 11C34 7 32 4 28 0Z" fill="#ffe34a" />
          </Icon>
        </DockItem>
        <DockItem label="Google Chrome" dots={1} active>
          <Icon size={48} box={48}>
            <circle cx="24" cy="24" r="24" fill="#2d9a49" />
            <path d="M3.200 12A24 24 0 0 1 44.800 12H24A12 12 0 0 0 13.600 30Z" fill="#e33b2e" />
            <path d="M44.800 12A24 24 0 0 1 24 48L34.400 30A12 12 0 0 0 24 12Z" fill="#fcc31a" />
            <circle cx="24" cy="24" r="12" fill="#fff" />
            <circle cx="24" cy="24" r="9.500" fill="#1a73e8" />
          </Icon>
        </DockItem>
        <DockItem label="Files">
          <Icon size={48} box={48}>
            <defs>
              <linearGradient id="fold">
                <stop offset="0" stopColor="#77264f" />
                <stop offset="1" stopColor="#e95420" />
              </linearGradient>
              <linearGradient id="body" x1="0" y1="0" x2="0" y2="1">
                <stop offset="0" stopColor="#929292" />
                <stop offset="1" stopColor="#bababa" />
              </linearGradient>
            </defs>
            <path d="M2 7Q2 4 5 4H19L23 7H43Q46 7 46 10V20H2Z" fill="url(#fold)" />
            <rect x="2" y="12" width="44" height="32" rx="4" fill="url(#body)" />
            <rect x="18" y="20" width="12" height="3" rx="1" fill="#fff" />
          </Icon>
        </DockItem>
        <DockItem label="Visual Studio Code">
          <Icon size={44} box={44}>
            <path d="M31 1L36 5V39L31 43L2 16Q0 14 2 13L5 11Q6 10 8 11L31 29Z" fill="#0e7fd0" />
            <path d="M31 1V15L8 33Q6 34 5 33L2 31Q0 29 2 28Z" fill="#0a68af" />
            <path d="M31 1L43 6V38L31 43Q33 42 33 39V5Q33 2 31 1Z" fill="#28a9f1" />
          </Icon>
        </DockItem>
        <DockItem label="Terminal">
          <Icon size={46} box={46}>
            <rect x="1.500" y="5" width="43" height="35" rx="4" fill="#4c4c4c" stroke="#777" />
            <path d="M8 10L13 13L8 16M14 19.500H22" fill="none" stroke="#fff" strokeWidth="1.600" />
          </Icon>
        </DockItem>
        <div className="my-[7px] h-px w-12 bg-[#6b6b69]" />
        <DockItem label="LibreOffice Writer" dots={2}>
          <Icon size={46} box={46}>
            <path d="M9 1H28L41 14V41Q41 45 37 45H9Q5 45 5 41V5Q5 1 9 1Z" fill="#1c78b8" />
            <path d="M10 4H26L38 16V40Q38 42 36 42H10Q8 42 8 40V6Q8 4 10 4Z" fill="#f7f7f7" />
            <path d="M31 1H41V11Z" fill="#1c78b8" />
            <path d="M11 16H19V18H11ZM11 20H19V22H11ZM11 24H19V26H11ZM11 29H35V31H11ZM11 33H35V35H11ZM11 37H29V39H11Z" fill="#1677b3" />
            <path d="M21 16H35V26H21Z" fill="#cfe8f5" stroke="#1677b3" strokeWidth="1.500" />
            <path d="M22 25V22L26 20L30 22L32 20L34 22V25Z" fill="#1677b3" />
          </Icon>
        </DockItem>
        <DockItem label="Web" dots={1}>
          <Icon size={46} box={46}>
            <defs>
              <linearGradient id="web" x1="0" y1="0" x2="0" y2="1">
                <stop offset="0" stopColor="#8c52d3" />
                <stop offset="1" stopColor="#9ba9e9" />
              </linearGradient>
            </defs>
            <circle cx="23" cy="23" r="22" fill="url(#web)" />
            <path d="M15 2Q8 20 24 45M36 6Q36 30 12 42M2 20L14 19L29 27L45 28M14 19L34 15L44 17M1 26Q10 38 18 35L40 37" fill="none" stroke="#dcc8f4" />
            <circle cx="14" cy="19" r="1.500" fill="#fff" />
            <circle cx="34" cy="15" r="1.500" fill="#fff" />
            <circle cx="29" cy="27" r="1.500" fill="#fff" />
            <circle cx="18" cy="35" r="1.500" fill="#fff" />
          </Icon>
        </DockItem>
        <DockItem label="SSD">
          <Icon size={46} box={46}>
            <rect x="5" y="1" width="36" height="44" rx="4" fill="url(#body)" stroke="#b9b9b9" />
            <text x="9" y="39" fontSize="17" fill="#777" fontFamily="Open Sans, sans-serif">SSD</text>
            <path d="M30 34V30Q30 26 35 26T40 30V34" fill="none" stroke="#767676" strokeWidth="2" />
            <rect x="27" y="34" width="16" height="11" fill="#7b7b7b" />
          </Icon>
        </DockItem>
        <DockItem label="Trash">
          <Icon size={46} box={46}>
            <rect x="5" y="1" width="36" height="44" rx="4" fill="#c9c9c9" stroke="#dedede" />
            <path d="M8 9L10 3H36L38 9Z" fill="#fff" stroke="#666" />
            <path d="M10 6H33L36 9" fill="none" stroke="#888" />
            <g fill="none" stroke="#259419" strokeWidth="3.500">
              <path d="M18 27L21 22H25L27 25" />
              <path d="M29 28L31 32L29 35H25" />
              <path d="M21 35H17L15 32L17 29" />
            </g>
            <path d="M24 26H30V21ZM26 31V39L22 35ZM14 29L19 26V31Z" fill="#259419" />
          </Icon>
        </DockItem>
        <button aria-label="Show Applications" className="mb-6 mt-auto grid grid-cols-3 gap-[6px]">
          {Array.from({ length: 9 }, (_, i) => (
            <span key={i} className="h-[6px] w-[6px] rounded-[2px] bg-[#f2f2f2]" />
          ))}
        </button>
      </div>
    </aside>
  );
}

/* ---------- Downloads ---------- */

const ImageFile = () => (
  <Icon box={16}>
    <rect x="1" y="1.500" width="14" height="13" rx="2" fill="#b545c0" stroke="#8b3595" />
    <path d="M4 11L7 6.500L9 9.500L10 8.500L12 11Z" fill="#f3c9f5" />
    <circle cx="10.500" cy="5.500" r="1" fill="#f3c9f5" />
  </Icon>
);
const DocFile = () => (
  <Icon box={16}>
    <path d="M3 0.500H10.500L14 4V14Q14 15.500 12.500 15.500H3Q1.500 15.500 1.500 14V2Q1.500 0.500 3 0.500Z" fill="#3873c8" stroke="#2a569a" />
    <path d="M4 6H8V12H4ZM9 5H12V12H9Z" fill="#fff" />
    <path d="M5 8H7V10H5Z" fill="#3873c8" />
  </Icon>
);

function Downloads() {
  const files = [
    ["map.jpeg", <ImageFile />],
    ["map (1).docx", <DocFile />],
    ["map.docx", <DocFile />],
  ];
  return (
    <footer className="flex h-[61px] shrink-0 items-center border-t border-[#c3c3c3] bg-[#fafafa] pl-1 pr-[13px] text-[#3c4043]">
      {files.map(([name, mark]) => (
        <div key={name} className="flex h-12 w-[233px] items-center border-r border-[#c6c6c6] pl-4 pr-[18px]">
          {mark}
          <button className="ml-[13px] flex-1 text-left">{name}</button>
          <button aria-label={"Options for " + name}>
            <Icon size={10} box={10} fill="none" stroke="currentColor" strokeWidth="2">
              <path d="M1 7L5 3L9 7" />
            </Icon>
          </button>
        </div>
      ))}
      <button className="ml-auto h-[34px] rounded border border-[#cfcfcf] bg-white px-[15px] text-sm font-semibold text-[#2d2f31]">Show all</button>
      <button aria-label="Close downloads" className="ml-[14px]">
        <Cross size={10} width={1.6} />
      </button>
    </footer>
  );
}

export default function App() {
  return (
    <div className="flex h-screen flex-col overflow-hidden bg-white font-['Open_Sans','Noto_Sans',sans-serif]">
      <TopBar />
      <div className="flex min-h-0 flex-1">
        <Dock />
        <div className="flex min-w-0 flex-1 flex-col">
          <TabStrip />
          <Toolbar />
          <main id="map" className="flex min-h-0 flex-1 flex-col items-center overflow-hidden bg-white px-2 pt-[21px] font-['Liberation_Serif',serif]">
            <h1 className="text-[32px] font-bold leading-[37px] text-[#ff0000]">Ariyalur - Cement City</h1>
            <h3 className="mb-5 mt-[22px] text-[19px] font-bold leading-[21px] text-[#0000ff]">Preetha S (22008734)</h3>
            <CityMap />
          </main>
          <Downloads />
        </div>
      </div>
    </div>
  );
}
